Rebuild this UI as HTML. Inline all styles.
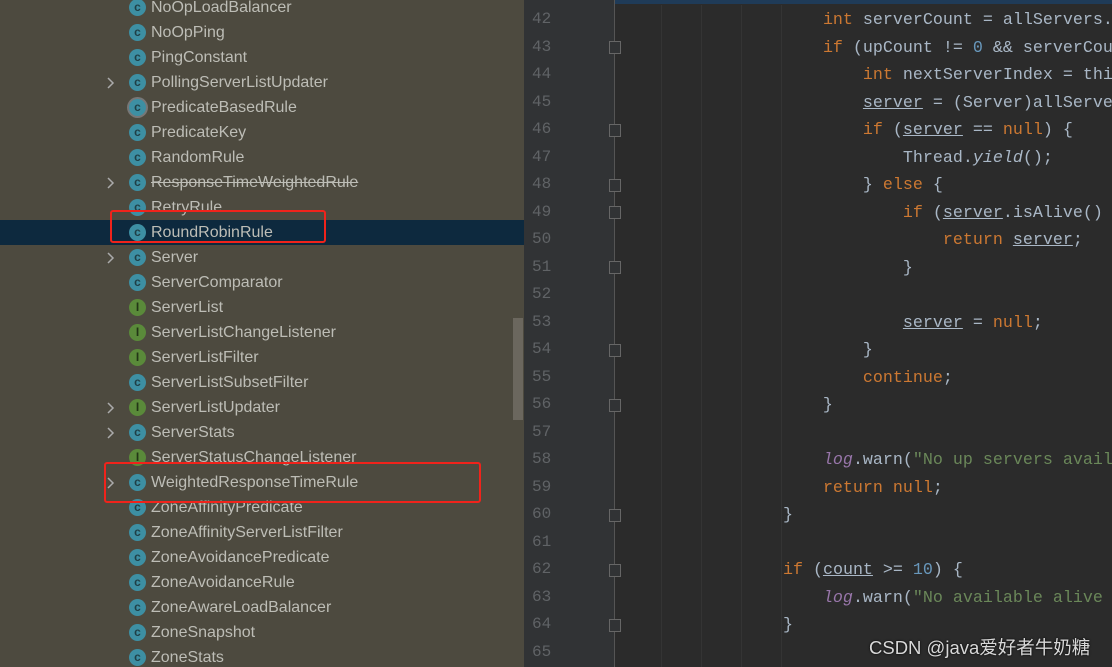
<!DOCTYPE html>
<html><head><meta charset="utf-8"><style>
*{margin:0;padding:0;box-sizing:border-box}
body{width:1112px;height:667px;overflow:hidden;position:relative;background:#2b2b2b;font-family:"Liberation Sans",sans-serif}
#left{position:absolute;left:0;top:0;width:524px;height:667px;background:#4d4a3f;overflow:hidden}
.row{position:absolute;left:0;width:524px;height:25px;line-height:25px;color:#bdbdb6;font-size:16px}
.row .t{position:absolute;left:151px;top:0}
.ic{position:absolute;left:129px;top:4px;width:17px;height:17px;border-radius:50%;background:#3d8fa3;color:#1f3f46;font-size:12px;line-height:17px;text-align:center;font-weight:bold}
.ic.i{background:#5a8a3a;color:#223516}
.chev{position:absolute;left:106px;top:7px;width:10px;height:12px}
.sel{background:#0d293e}
#gutter{position:absolute;left:524px;top:0;width:91px;height:667px;background:#313335;border-right:1px solid #555}
.ln{position:absolute;left:532px;color:#606366;font-family:"Liberation Mono",monospace;font-size:16px;height:27px;line-height:27px}
#codewrap{position:absolute;left:0;top:0;width:1112px;height:667px;overflow:hidden}
.code{position:absolute;left:663px;font-family:"Liberation Mono",monospace;font-size:16.67px;color:#a9b7c6;white-space:pre;height:27px;line-height:27px}
.k{color:#cc7832}.n{color:#6897bb}.s{color:#6a8759}.l{color:#9876aa;font-style:italic}.u{text-decoration:underline}.it{font-style:italic}
.g{position:absolute;top:5px;width:1px;height:662px;background:#343434}
.fold{position:absolute;left:609px;width:12px;height:13px;border:1px solid #666;background:#313335}
</style></head><body>
<div id="left">
<div class="row" style="top:-5px"><div class="ic">c</div><span class="t">NoOpLoadBalancer</span></div>
<div class="row" style="top:20px"><div class="ic">c</div><span class="t">NoOpPing</span></div>
<div class="row" style="top:45px"><div class="ic">c</div><span class="t">PingConstant</span></div>
<div class="row" style="top:70px"><svg class="chev" viewBox="0 0 10 12"><path d="M2 1l5 5-5 5" fill="none" stroke="#aaa" stroke-width="1.5"/></svg><div class="ic">c</div><span class="t">PollingServerListUpdater</span></div>
<div class="row" style="top:95px"><div class="ic" style="box-shadow:0 0 0 2px #777">c</div><span class="t">PredicateBasedRule</span></div>
<div class="row" style="top:120px"><div class="ic">c</div><span class="t">PredicateKey</span></div>
<div class="row" style="top:145px"><div class="ic">c</div><span class="t">RandomRule</span></div>
<div class="row" style="top:170px"><svg class="chev" viewBox="0 0 10 12"><path d="M2 1l5 5-5 5" fill="none" stroke="#aaa" stroke-width="1.5"/></svg><div class="ic">c</div><span class="t" style="text-decoration:line-through">ResponseTimeWeightedRule</span></div>
<div class="row" style="top:195px"><div class="ic">c</div><span class="t">RetryRule</span></div>
<div class="row sel" style="top:220px"><div class="ic">c</div><span class="t">RoundRobinRule</span></div>
<div class="row" style="top:245px"><svg class="chev" viewBox="0 0 10 12"><path d="M2 1l5 5-5 5" fill="none" stroke="#aaa" stroke-width="1.5"/></svg><div class="ic">c</div><span class="t">Server</span></div>
<div class="row" style="top:270px"><div class="ic">c</div><span class="t">ServerComparator</span></div>
<div class="row" style="top:295px"><div class="ic i">I</div><span class="t">ServerList</span></div>
<div class="row" style="top:320px"><div class="ic i">I</div><span class="t">ServerListChangeListener</span></div>
<div class="row" style="top:345px"><div class="ic i">I</div><span class="t">ServerListFilter</span></div>
<div class="row" style="top:370px"><div class="ic">c</div><span class="t">ServerListSubsetFilter</span></div>
<div class="row" style="top:395px"><svg class="chev" viewBox="0 0 10 12"><path d="M2 1l5 5-5 5" fill="none" stroke="#aaa" stroke-width="1.5"/></svg><div class="ic i">I</div><span class="t">ServerListUpdater</span></div>
<div class="row" style="top:420px"><svg class="chev" viewBox="0 0 10 12"><path d="M2 1l5 5-5 5" fill="none" stroke="#aaa" stroke-width="1.5"/></svg><div class="ic">c</div><span class="t">ServerStats</span></div>
<div class="row" style="top:445px"><div class="ic i">I</div><span class="t">ServerStatusChangeListener</span></div>
<div class="row" style="top:470px"><svg class="chev" viewBox="0 0 10 12"><path d="M2 1l5 5-5 5" fill="none" stroke="#aaa" stroke-width="1.5"/></svg><div class="ic">c</div><span class="t">WeightedResponseTimeRule</span></div>
<div class="row" style="top:495px"><div class="ic">c</div><span class="t">ZoneAffinityPredicate</span></div>
<div class="row" style="top:520px"><div class="ic">c</div><span class="t">ZoneAffinityServerListFilter</span></div>
<div class="row" style="top:545px"><div class="ic">c</div><span class="t">ZoneAvoidancePredicate</span></div>
<div class="row" style="top:570px"><div class="ic">c</div><span class="t">ZoneAvoidanceRule</span></div>
<div class="row" style="top:595px"><div class="ic">c</div><span class="t">ZoneAwareLoadBalancer</span></div>
<div class="row" style="top:620px"><div class="ic">c</div><span class="t">ZoneSnapshot</span></div>
<div class="row" style="top:645px"><div class="ic">c</div><span class="t">ZoneStats</span></div>
<div style="position:absolute;left:513px;top:318px;width:10px;height:102px;background:#6b675e"></div>
<div style="position:absolute;left:110px;top:210px;width:216px;height:33px;border:2px solid #f0231b;border-radius:3px"></div>
<div style="position:absolute;left:104px;top:462px;width:377px;height:41px;border:2px solid #f0231b;border-radius:3px"></div>
</div>
<div style="position:absolute;left:524px;top:0;width:588px;height:4px;background:#1f3b58"></div>
<div id="gutter"></div>
<div class="g" style="left:661px"></div><div class="g" style="left:701px"></div><div class="g" style="left:741px"></div><div class="g" style="left:781px"></div>
<div class="fold" style="top:41px"></div><div class="fold" style="top:124px"></div><div class="fold" style="top:179px"></div><div class="fold" style="top:206px"></div><div class="fold" style="top:261px"></div><div class="fold" style="top:344px"></div><div class="fold" style="top:399px"></div><div class="fold" style="top:509px"></div><div class="fold" style="top:564px"></div><div class="fold" style="top:619px"></div>
<div class="ln" style="top:6px">42</div><div class="ln" style="top:34px">43</div><div class="ln" style="top:61px">44</div><div class="ln" style="top:89px">45</div><div class="ln" style="top:116px">46</div><div class="ln" style="top:144px">47</div><div class="ln" style="top:171px">48</div><div class="ln" style="top:199px">49</div><div class="ln" style="top:226px">50</div><div class="ln" style="top:254px">51</div><div class="ln" style="top:281px">52</div><div class="ln" style="top:309px">53</div><div class="ln" style="top:336px">54</div><div class="ln" style="top:364px">55</div><div class="ln" style="top:391px">56</div><div class="ln" style="top:419px">57</div><div class="ln" style="top:446px">58</div><div class="ln" style="top:474px">59</div><div class="ln" style="top:501px">60</div><div class="ln" style="top:529px">61</div><div class="ln" style="top:556px">62</div><div class="ln" style="top:584px">63</div><div class="ln" style="top:611px">64</div><div class="ln" style="top:639px">65</div>
<div id="codewrap">
<div class="code" style="top:7px">                <span class="k">int</span> serverCount = allServers.size();</div>
<div class="code" style="top:35px">                <span class="k">if</span> (upCount != <span class="n">0</span> &amp;&amp; serverCount</div>
<div class="code" style="top:62px">                    <span class="k">int</span> nextServerIndex = this</div>
<div class="code" style="top:90px">                    <span class="u">server</span> = (Server)allServers</div>
<div class="code" style="top:117px">                    <span class="k">if</span> (<span class="u">server</span> == <span class="k">null</span>) {</div>
<div class="code" style="top:145px">                        Thread.<span class="it">yield</span>();</div>
<div class="code" style="top:172px">                    } <span class="k">else</span> {</div>
<div class="code" style="top:200px">                        <span class="k">if</span> (<span class="u">server</span>.isAlive() &amp;&amp;</div>
<div class="code" style="top:227px">                            <span class="k">return</span> <span class="u">server</span>;</div>
<div class="code" style="top:255px">                        }</div>
<div class="code" style="top:310px">                        <span class="u">server</span> = <span class="k">null</span>;</div>
<div class="code" style="top:337px">                    }</div>
<div class="code" style="top:365px">                    <span class="k">continue</span>;</div>
<div class="code" style="top:392px">                }</div>
<div class="code" style="top:447px">                <span class="l">log</span>.warn(<span class="s">"No up servers available</span></div>
<div class="code" style="top:475px">                <span class="k">return null</span>;</div>
<div class="code" style="top:502px">            }</div>
<div class="code" style="top:557px">            <span class="k">if</span> (<span class="u">count</span> &gt;= <span class="n">10</span>) {</div>
<div class="code" style="top:585px">                <span class="l">log</span>.warn(<span class="s">"No available alive s</span></div>
<div class="code" style="top:612px">            }</div>
</div>
<div style="position:absolute;left:869px;top:634px;color:#d8d8d8;font-size:18.5px;font-family:'Liberation Sans','Noto Sans CJK SC',sans-serif;text-shadow:0 0 2px #000">CSDN @java爱好者牛奶糖</div>
</body></html>
